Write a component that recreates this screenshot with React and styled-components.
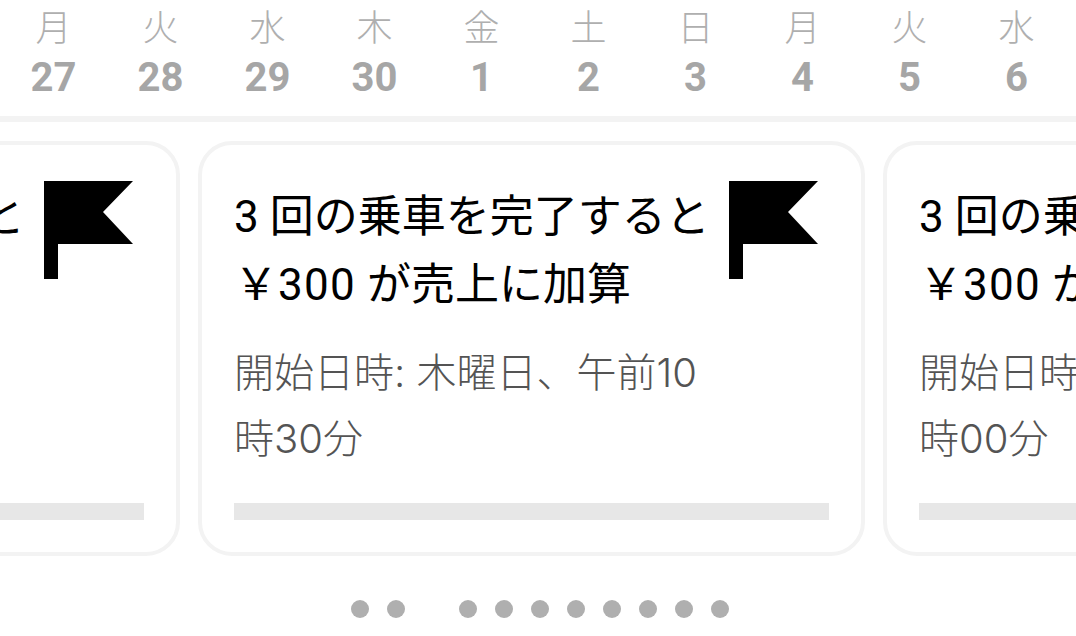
import React from "react";
import styled, { createGlobalStyle } from "styled-components";

const GlobalStyle = createGlobalStyle`
  html, body {
    margin: 0;
    padding: 0;
    background: #fff;
    overflow: hidden;
  }
`;

const Page = styled.div`
  width: 1076px;
  height: 636px;
  overflow: hidden;
  font-family: "Roboto", "Noto Sans CJK JP", sans-serif;
`;

const DayStrip = styled.div`
  display: flex;
  height: 116px;
  border-bottom: 6px solid #f3f3f3;
`;

const Day = styled.div`
  flex: 0 0 107px;
  display: flex;
  flex-direction: column;
  align-items: center;
`;

const DayName = styled.div`
  height: 54px;
  line-height: 50px;
  font-size: 36px;
  font-family: "Noto Sans CJK JP", sans-serif;
  font-weight: 300;
  color: #afafaf;
`;

const DayNumber = styled.div`
  height: 48px;
  line-height: 48px;
  font-size: 40px;
  font-weight: 700;
  color: #a6a6a6;
`;

const CardRow = styled.div`
  display: flex;
  gap: 18px;
  margin: 19px 0 0 -487px;
`;

const Card = styled.div`
  flex: 0 0 667px;
  box-sizing: border-box;
  height: 415px;
  padding: 36px 32px 32px;
  border: 4px solid #f3f3f3;
  border-radius: 34px;
  display: flex;
  flex-direction: column;
`;

const CardTop = styled.div`
  display: flex;
  justify-content: space-between;
  align-items: flex-start;
`;

const Title = styled.div`
  width: 480px;
  padding-top: 2px;
  font-family: "Roboto", "Noto Sans CJK JP", sans-serif;
  font-size: 44px;
  line-height: 68px;
  font-weight: 400;
  color: #000;
`;

const Amount = styled.span`
  letter-spacing: 1.3px;
`;

const Flag = styled.svg`
  flex: none;
  width: 89px;
  height: 98px;
  margin: 0 11px 0 0;
`;

const Subtitle = styled.div`
  width: 480px;
  margin-top: 21px;
  font-family: "Inter", "Noto Sans CJK JP", sans-serif;
  font-size: 40px;
  line-height: 66px;
  font-weight: 300;
  color: #545454;
`;

const Progress = styled.div`
  margin-top: auto;
  height: 17px;
  background: #e7e7e7;
`;

const Dots = styled.div`
  display: flex;
  justify-content: center;
  gap: 18px;
  margin: 44px 0 0 4px;
`;

const Dot = styled.span`
  width: 18px;
  height: 18px;
  border-radius: 50%;
  background: ${(p) => (p.$active ? "transparent" : "#afafaf")};
`;

const days = [
  ["月", 27],
  ["火", 28],
  ["水", 29],
  ["木", 30],
  ["金", 1],
  ["土", 2],
  ["日", 3],
  ["月", 4],
  ["火", 5],
  ["水", 6],
];

const cards = [
  { id: 1, when: "開始日時: 水曜日、午前" },
  { id: 2, when: "開始日時: 木曜日、午前10時30分" },
  { id: 3, when: "開始日時: 金曜日、午前10時00分" },
];

const FlagIcon = () => (
  <Flag viewBox="0 0 89 98">
    <path d="M0 0H89L59 31L89 63H14V98H0Z" fill="#000" />
  </Flag>
);

const App = () => {
  return (
    <Page>
      <GlobalStyle />
      <DayStrip>
        {days.map(([name, num], i) => (
          <Day key={i}>
            <DayName>{name}</DayName>
            <DayNumber>{num}</DayNumber>
          </Day>
        ))}
      </DayStrip>
      <CardRow>
        {cards.map((card) => (
          <Card key={card.id}>
            <CardTop>
              <Title>
                3 回の乗車を完了すると
                <br />
                {"\uFFE5"}<Amount>300</Amount> が売上に加算
              </Title>
              <FlagIcon />
            </CardTop>
            <Subtitle>{card.when}</Subtitle>
            <Progress />
          </Card>
        ))}
      </CardRow>
      <Dots>
        {Array.from({ length: 11 }).map((_, i) => (
          <Dot key={i} $active={i === 2} />
        ))}
      </Dots>
    </Page>
  );
};

export default App;
